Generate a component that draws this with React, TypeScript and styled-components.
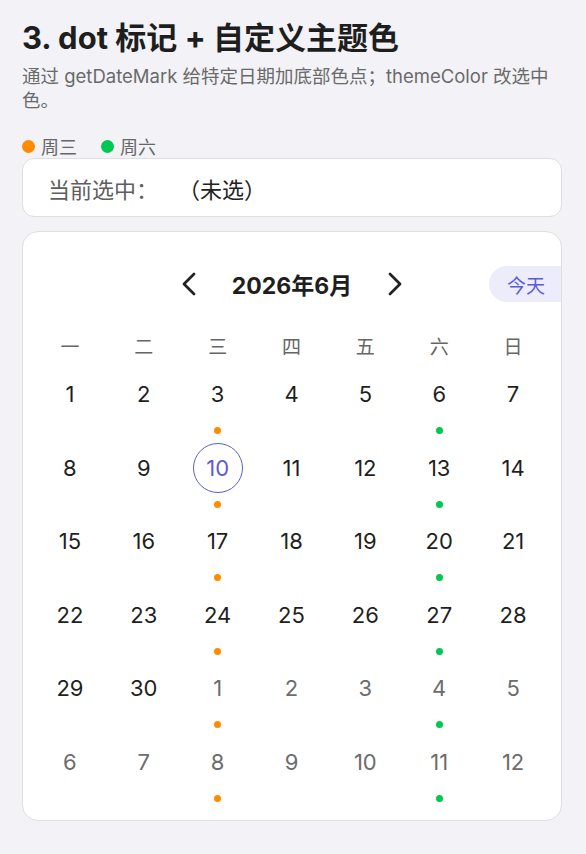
import React from "react";
import styled, { createGlobalStyle, css } from "styled-components";

const GlobalStyle = createGlobalStyle`
  html, body {
    margin: 0;
    padding: 0;
    background: #f2f2f7;
  }
  body {
    font-family: Inter, "Noto Sans CJK SC", "Noto Sans", sans-serif;
    color: #1f1f1f;
  }
`;

const THEME = "#5b5bd9";
const WED = "#ff8c00";
const SAT = "#00c853";

const Page = styled.div`
  padding: 18px 24px 32px 22px;
  display: flex;
  flex-direction: column;
`;

const Title = styled.h1`
  margin: 0;
  font-size: 31px;
  line-height: 40px;
  font-weight: 700;
  color: #1e1e1e;
`;

const Subtitle = styled.p`
  margin: 6px 0 0;
  font-size: 18.5px;
  line-height: 24px;
  color: #6a6a6a;
`;

const Legend = styled.div`
  display: flex;
  align-items: center;
  gap: 24px;
  margin-top: 22px;
  height: 24px;
`;

const LegendItem = styled.span`
  display: inline-flex;
  align-items: center;
  gap: 6px;
  font-size: 18px;
  color: #666;
`;

const Swatch = styled.i<{ $color: string }>`
  display: block;
  width: 13px;
  height: 13px;
  border-radius: 50%;
  background: ${(p) => p.$color};
`;

const SelectionCard = styled.div`
  height: 59px;
  box-sizing: border-box;
  display: flex;
  align-items: center;
  gap: 20px;
  padding: 0 25px;
  background: #fff;
  border: 1px solid #dedee3;
  border-radius: 12px;
  font-size: 22px;
`;

const SelLabel = styled.span`
  color: #5e5e5e;
`;

const SelValue = styled.span`
  color: #222;
`;

const CalendarCard = styled.div`
  margin-top: 14px;
  background: #fff;
  border: 1px solid #dedee3;
  border-radius: 16px;
  overflow: hidden;
  padding: 34px 0 14px;
`;

const Header = styled.div`
  display: grid;
  grid-template-columns: 1fr auto 1fr;
  align-items: center;
  height: 36px;
`;

const Nav = styled.div`
  grid-column: 2;
  display: flex;
  align-items: center;
  gap: 25px;
`;

const ArrowButton = styled.button`
  width: 36px;
  height: 36px;
  padding: 0;
  border: none;
  background: transparent;
  display: flex;
  align-items: center;
  justify-content: center;
  color: #222;
`;

const MonthTitle = styled.span`
  font-size: 23px;
  font-weight: 700;
  color: #1e1e1e;
`;

const TodayButton = styled.button`
  grid-column: 3;
  justify-self: end;
  height: 36px;
  width: 72px;
  padding: 0 0 0 2px;
  border: none;
  border-radius: 18px 0 0 18px;
  background: #ececfb;
  color: ${THEME};
  font-family: inherit;
  font-size: 19px;
`;

const Grid = styled.div`
  display: grid;
  grid-template-columns: repeat(7, 1fr);
  margin: 0 11px 0 10px;
`;

const WeekdayRow = styled(Grid)`
  margin-top: 34px;
  margin-bottom: 5px;
`;

const Weekday = styled.span`
  height: 24px;
  line-height: 24px;
  text-align: center;
  font-size: 19px;
  color: #666;
`;

const Cell = styled.div`
  height: 73.5px;
  box-sizing: border-box;
  padding-top: 4px;
  display: flex;
  flex-direction: column;
  align-items: center;
  gap: 8px;
`;

const DayNumber = styled.span<{ $muted: boolean; $selected: boolean }>`
  width: 50px;
  height: 50px;
  box-sizing: border-box;
  border-radius: 50%;
  display: flex;
  align-items: center;
  justify-content: center;
  font-size: 22px;
  color: ${(p) => (p.$muted ? "#6c6c6c" : "#1f1f1f")};
  ${(p) =>
    p.$selected &&
    css`
      border: 1.5px solid ${THEME};
      color: ${THEME};
    `}
`;

const Dot = styled.i<{ $color?: string }>`
  display: block;
  width: 7px;
  height: 7px;
  border-radius: 50%;
  background: ${(p) => p.$color ?? "transparent"};
`;

const Chevron = ({ dir }: { dir: "left" | "right" }) => (
  <svg width="16" height="24" viewBox="0 0 16 24" fill="none">
    <path
      d={dir === "left" ? "M13 2 L3 12 L13 22" : "M3 2 L13 12 L3 22"}
      stroke="currentColor"
      strokeWidth="2.8"
      strokeLinecap="round"
      strokeLinejoin="round"
    />
  </svg>
);

type Day = { n: number; muted: boolean; mark?: string };

// June 2026 begins on a Monday; six Monday-first weeks spill into July.
const buildDays = (): Day[] => {
  const days: Day[] = [];
  for (let i = 0; i < 42; i++) {
    const inJune = i < 30;
    const n = inJune ? i + 1 : i - 29;
    const col = i % 7;
    const mark = col === 2 ? WED : col === 5 ? SAT : undefined;
    days.push({ n, muted: !inJune, mark });
  }
  return days;
};

const WEEKDAYS = ["一", "二", "三", "四", "五", "六", "日"];

export default function App() {
  const days = buildDays();
  return (
    <>
      <GlobalStyle />
      <Page>
        <Title>3. dot 标记 + 自定义主题色</Title>
        <Subtitle>
          通过 getDateMark 给特定日期加底部色点；themeColor 改选中色。
        </Subtitle>
        <Legend>
          <LegendItem>
            <Swatch $color={WED} />
            周三
          </LegendItem>
          <LegendItem>
            <Swatch $color={SAT} />
            周六
          </LegendItem>
        </Legend>
        <SelectionCard>
          <SelLabel>当前选中：</SelLabel>
          <SelValue>（未选）</SelValue>
        </SelectionCard>
        <CalendarCard>
          <Header>
            <Nav>
              <ArrowButton aria-label="上个月">
                <Chevron dir="left" />
              </ArrowButton>
              <MonthTitle>2026年6月</MonthTitle>
              <ArrowButton aria-label="下个月">
                <Chevron dir="right" />
              </ArrowButton>
            </Nav>
            <TodayButton>今天</TodayButton>
          </Header>
          <WeekdayRow>
            {WEEKDAYS.map((w) => (
              <Weekday key={w}>{w}</Weekday>
            ))}
          </WeekdayRow>
          <Grid>
            {days.map((d, i) => (
              <Cell key={i}>
                <DayNumber $muted={d.muted} $selected={!d.muted && d.n === 10}>
                  {d.n}
                </DayNumber>
                <Dot $color={d.mark} />
              </Cell>
            ))}
          </Grid>
        </CalendarCard>
      </Page>
    </>
  );
}
